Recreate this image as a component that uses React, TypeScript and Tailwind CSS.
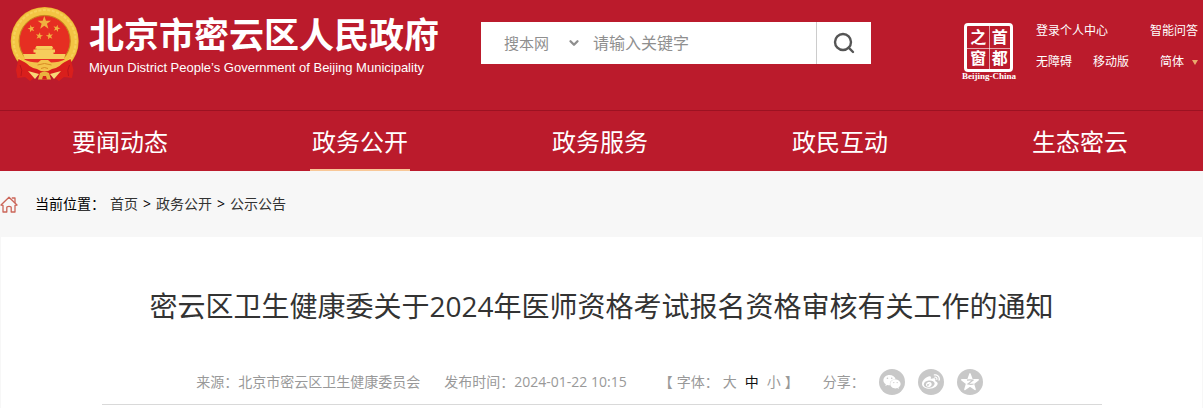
import React, { useState } from 'react';
import { ChevronDown, Search } from 'lucide-react';
import { FaWeibo, FaWeixin } from 'react-icons/fa';

const NAV_ITEMS = ['要闻动态', '政务公开', '政务服务', '政民互动', '生态密云'];
const FONT_SIZES = ['大', '中', '小'];

const STAR = 'M0 -10 L2.4 -3.2 L9.5 -3.1 L3.8 1.2 L5.9 8.1 L0 4 L-5.9 8.1 L-3.8 1.2 L-9.5 -3.1 L-2.4 -3.2 Z';

const Emblem: React.FC = () => (
  <svg viewBox="0 0 70 75" className="h-[75px] w-[70px] shrink-0" aria-label="国徽" role="img">
    <circle cx="34.7" cy="34" r="34" fill="#e9b02f" />
    <circle cx="34.7" cy="34" r="29.8" fill="none" stroke="#f3c443" strokeWidth="7" />
    <circle cx="34.7" cy="34" r="31" fill="none" stroke="#fadb6a" strokeWidth="2" strokeDasharray="3 1.5" opacity="0.6" />
    <circle cx="34.7" cy="34" r="25.5" fill="#e62e22" stroke="#c7831f" strokeWidth="1" />
    <g fill="#f0b040">
      <path d={STAR} transform="translate(34.3 16) scale(0.7)" />
      <path d={STAR} transform="translate(21.3 21.7) scale(0.38) rotate(-15)" />
      <path d={STAR} transform="translate(46.7 21.4) scale(0.38) rotate(15)" />
      <path d={STAR} transform="translate(29.3 29) scale(0.38) rotate(10)" />
      <path d={STAR} transform="translate(39.6 29) scale(0.38) rotate(-10)" />
    </g>
    <path d="M26.5 39 H42 L43.5 41.5 H42 V42.5 H45 V45.5 H43.5 V47 H55.5 L54 52 H15 L13 47 H25.5 V45.5 H23.5 V42.5 H26.5 V41.5 H25 Z" fill="#f6cd5c" />
    <path d="M25 42.3 H43.5" stroke="#e8a93c" strokeWidth="0.6" />
    <path d="M14 52 H55 L50 58 H19 Z" fill="#e62e22" />
    <path d="M8.5 52 L18 57 L34.5 61 L51 57 L60.5 52 L63.5 63 L62 71 L54 70 L49 74 L42 69 H27 L20 74 L15 70 L7.5 71 L6 63 Z" fill="#d91f1c" />
    <path d="M10 58 Q13 63 11 69 M59.5 58 Q56.5 63 58.5 69" fill="none" stroke="#b8151b" strokeWidth="1" />
    <path d="M13 52 Q20 55.5 28 55.5 L31 53 H38 L41 55.5 Q49 55.5 56 52 Q50 61 42 62 Q38 64.5 34.5 64.5 Q31 64.5 27 62 Q19 61 13 52 Z" fill="#f3c34a" />
    <path d="M27.5 58 Q34.5 55 41.5 58 M31 61.5 Q34.5 59.5 38 61.5" fill="none" stroke="#d98b25" strokeWidth="1" />
    <path d="M18 64 L29 67 L25 72 Z M51 64 L40 67 L44 72 Z" fill="#f8d878" />
    <path d="M30 66 Q34.5 63.5 39 66 L41 72.5 H28 Z" fill="#eab23e" />
    <path d="M33 69 H36 L37 72.5 H32 Z" fill="#d4201c" />
  </svg>
);

const CapitalSeal: React.FC = () => (
  <a href="#" className="flex flex-col items-center">
    <span className="relative grid size-[49px] grid-cols-2 grid-rows-2 place-items-center rounded-sm border-3 border-white text-base leading-[18px] font-bold">
      <span>之</span>
      <span>首</span>
      <span>窗</span>
      <span>都</span>
      <span className="absolute inset-y-0 left-1/2 w-px bg-white/60" />
      <span className="absolute inset-x-0 top-1/2 h-px bg-white/60" />
    </span>
    <span className="font-['Liberation_Serif',serif] text-[9px] leading-[9px] font-bold">Beijing-China</span>
  </a>
);

const QzoneIcon: React.FC = () => (
  <svg viewBox="0 0 20 20" className="size-5">
    <path d={STAR} transform="translate(10 10.5) scale(0.86)" fill="#fff" stroke="#fff" strokeWidth="1.8" strokeLinejoin="round" />
    <path d="M7 8.2 Q10 7.6 12.8 8.2 L8 12 Q11 12.7 13.6 12" fill="none" stroke="#c8c8c8" strokeWidth="1.2" />
  </svg>
);

const HomeIcon: React.FC = () => (
  <svg viewBox="0 0 18 17" className="h-[17px] w-[18px]" fill="none" stroke="#cb6558" strokeWidth="1.3" strokeLinejoin="round" strokeLinecap="round">
    <path d="M1 9 L9 1.2 L17 9 L15 9.3 V16 H11.2 V11.5 Q11.2 10.3 9 10.3 Q6.8 10.3 6.8 11.5 V16 H3 V9.3 Z" />
    <path d="M12.3 2 H15 V6.5" />
  </svg>
);

const SearchBar: React.FC = () => {
  const [keyword, setKeyword] = useState('');

  return (
    <form className="mt-[22px] flex h-[42px] w-[390px] bg-white text-[#8f8f8f]" onSubmit={(e) => e.preventDefault()}>
      <div className="relative flex w-[104px] items-center">
        <select aria-label="搜索范围" className="h-full w-full appearance-none pl-[23px] text-[15px] outline-none">
          <option>搜本网</option>
        </select>
        <ChevronDown className="pointer-events-none absolute right-1 size-3.5" strokeWidth={4} />
      </div>
      <input
        type="text"
        aria-label="关键字"
        value={keyword}
        onChange={(e) => setKeyword(e.target.value)}
        placeholder="请输入关键字"
        className="min-w-0 flex-1 pl-2 text-base outline-none placeholder:text-[#8f8f8f]"
      />
      <button type="submit" aria-label="搜索" className="flex w-[55px] items-center justify-center border-l border-[#ccc] text-[#555]">
        <Search className="size-6" strokeWidth={2.4} />
      </button>
    </form>
  );
};

const Header: React.FC = () => (
  <header className="bg-[#bb1b2c] text-white">
    <div className="flex h-[110px] items-start">
      <a href="#" className="flex w-[481px] shrink-0 items-start pt-[7px] pl-[10px]">
        <Emblem />
        <span className="ml-[9px] flex flex-col whitespace-nowrap">
          <span className="mt-1 text-[35px] leading-[48px] font-bold">北京市密云区人民政府</span>
          <span className="font-['Liberation_Sans',sans-serif] text-[13px] leading-[18px]">
            Miyun District People’s Government of Beijing Municipality
          </span>
        </span>
      </a>
      <SearchBar />
      <div className="ml-auto flex pt-[23px] pr-[5px] text-xs leading-4">
        <CapitalSeal />
        <div className="ml-5 flex w-[162px] flex-col gap-[15px] whitespace-nowrap">
          <div className="flex justify-between">
            <a href="#">登录个人中心</a>
            <a href="#">智能问答</a>
          </div>
          <div className="flex items-center">
            <a href="#">无障碍</a>
            <a href="#" className="ml-[21px]">移动版</a>
            <button type="button" className="ml-auto flex items-center gap-2">
              简体
              <span className="border-x-3 border-t-5 border-x-transparent border-t-[#e9a96c]" />
            </button>
          </div>
        </div>
      </div>
    </div>
    <nav className="border-t border-[#9c1222]">
      <ul className="flex max-w-[1200px]">
        {NAV_ITEMS.map((item) => (
          <li key={item} className="flex flex-1 justify-center">
            <a
              href="#"
              className={`w-[100px] border-b-2 pt-1 text-center text-2xl leading-[54px] ${
                item === '政务公开' ? 'border-[#f8c898]' : 'border-transparent'
              }`}
            >
              {item}
            </a>
          </li>
        ))}
      </ul>
    </nav>
  </header>
);

const Breadcrumb: React.FC = () => (
  <div className="flex h-[66px] items-center text-sm text-[#333]">
    <HomeIcon />
    <span className="ml-[17px] text-black">当前位置：</span>
    <nav className="ml-[5px] flex gap-[5px]">
      <a href="#">首页</a>
      <span className="text-black">&gt;</span>
      <a href="#">政务公开</a>
      <span className="text-black">&gt;</span>
      <a href="#">公示公告</a>
    </nav>
  </div>
);

const Article: React.FC = () => {
  const [size, setSize] = useState('中');

  return (
    <main className="mx-auto max-w-[1201px] bg-white">
      <h1 className="pt-12 text-center text-[28px] leading-[42px] text-[#333]">
        密云区卫生健康委关于2024年医师资格考试报名资格审核有关工作的通知
      </h1>
      <div className="mx-auto mt-8 flex h-[46px] max-w-[1000px] items-center justify-center border-b border-[#d9d9d9] pr-6 text-sm whitespace-nowrap text-[#999]">
        <span>来源：北京市密云区卫生健康委员会</span>
        <span className="ml-6">发布时间：2024-01-22 10:15</span>
        <span className="ml-8 flex items-center">
          【
          <span className="mx-1">字体：</span>
          <span className="flex gap-2">
            {FONT_SIZES.map((s) => (
              <button
                key={s}
                type="button"
                onClick={() => setSize(s)}
                className={s === size ? 'text-[#111]' : ''}
              >
                {s}
              </button>
            ))}
          </span>
          <span className="ml-1">】</span>
        </span>
        <span className="ml-6">分享：</span>
        <div className="ml-3.5 flex gap-[13px] text-white">
          <a href="#" aria-label="微信" className="flex size-[26px] items-center justify-center rounded-full bg-[#c8c8c8]">
            <FaWeixin className="size-[18px]" />
          </a>
          <a href="#" aria-label="微博" className="flex size-[26px] items-center justify-center rounded-full bg-[#c8c8c8]">
            <FaWeibo className="size-[18px]" />
          </a>
          <a href="#" aria-label="QQ空间" className="flex size-[26px] items-center justify-center rounded-full bg-[#c8c8c8]">
            <QzoneIcon />
          </a>
        </div>
      </div>
      <div className="h-[3px]" />
    </main>
  );
};

export default function App() {
  return (
    <div className="bg-[#f7f7f7] font-['Open_Sans','Noto_Sans_CJK_SC',sans-serif]">
      <Header />
      <Breadcrumb />
      <Article />
    </div>
  );
}
